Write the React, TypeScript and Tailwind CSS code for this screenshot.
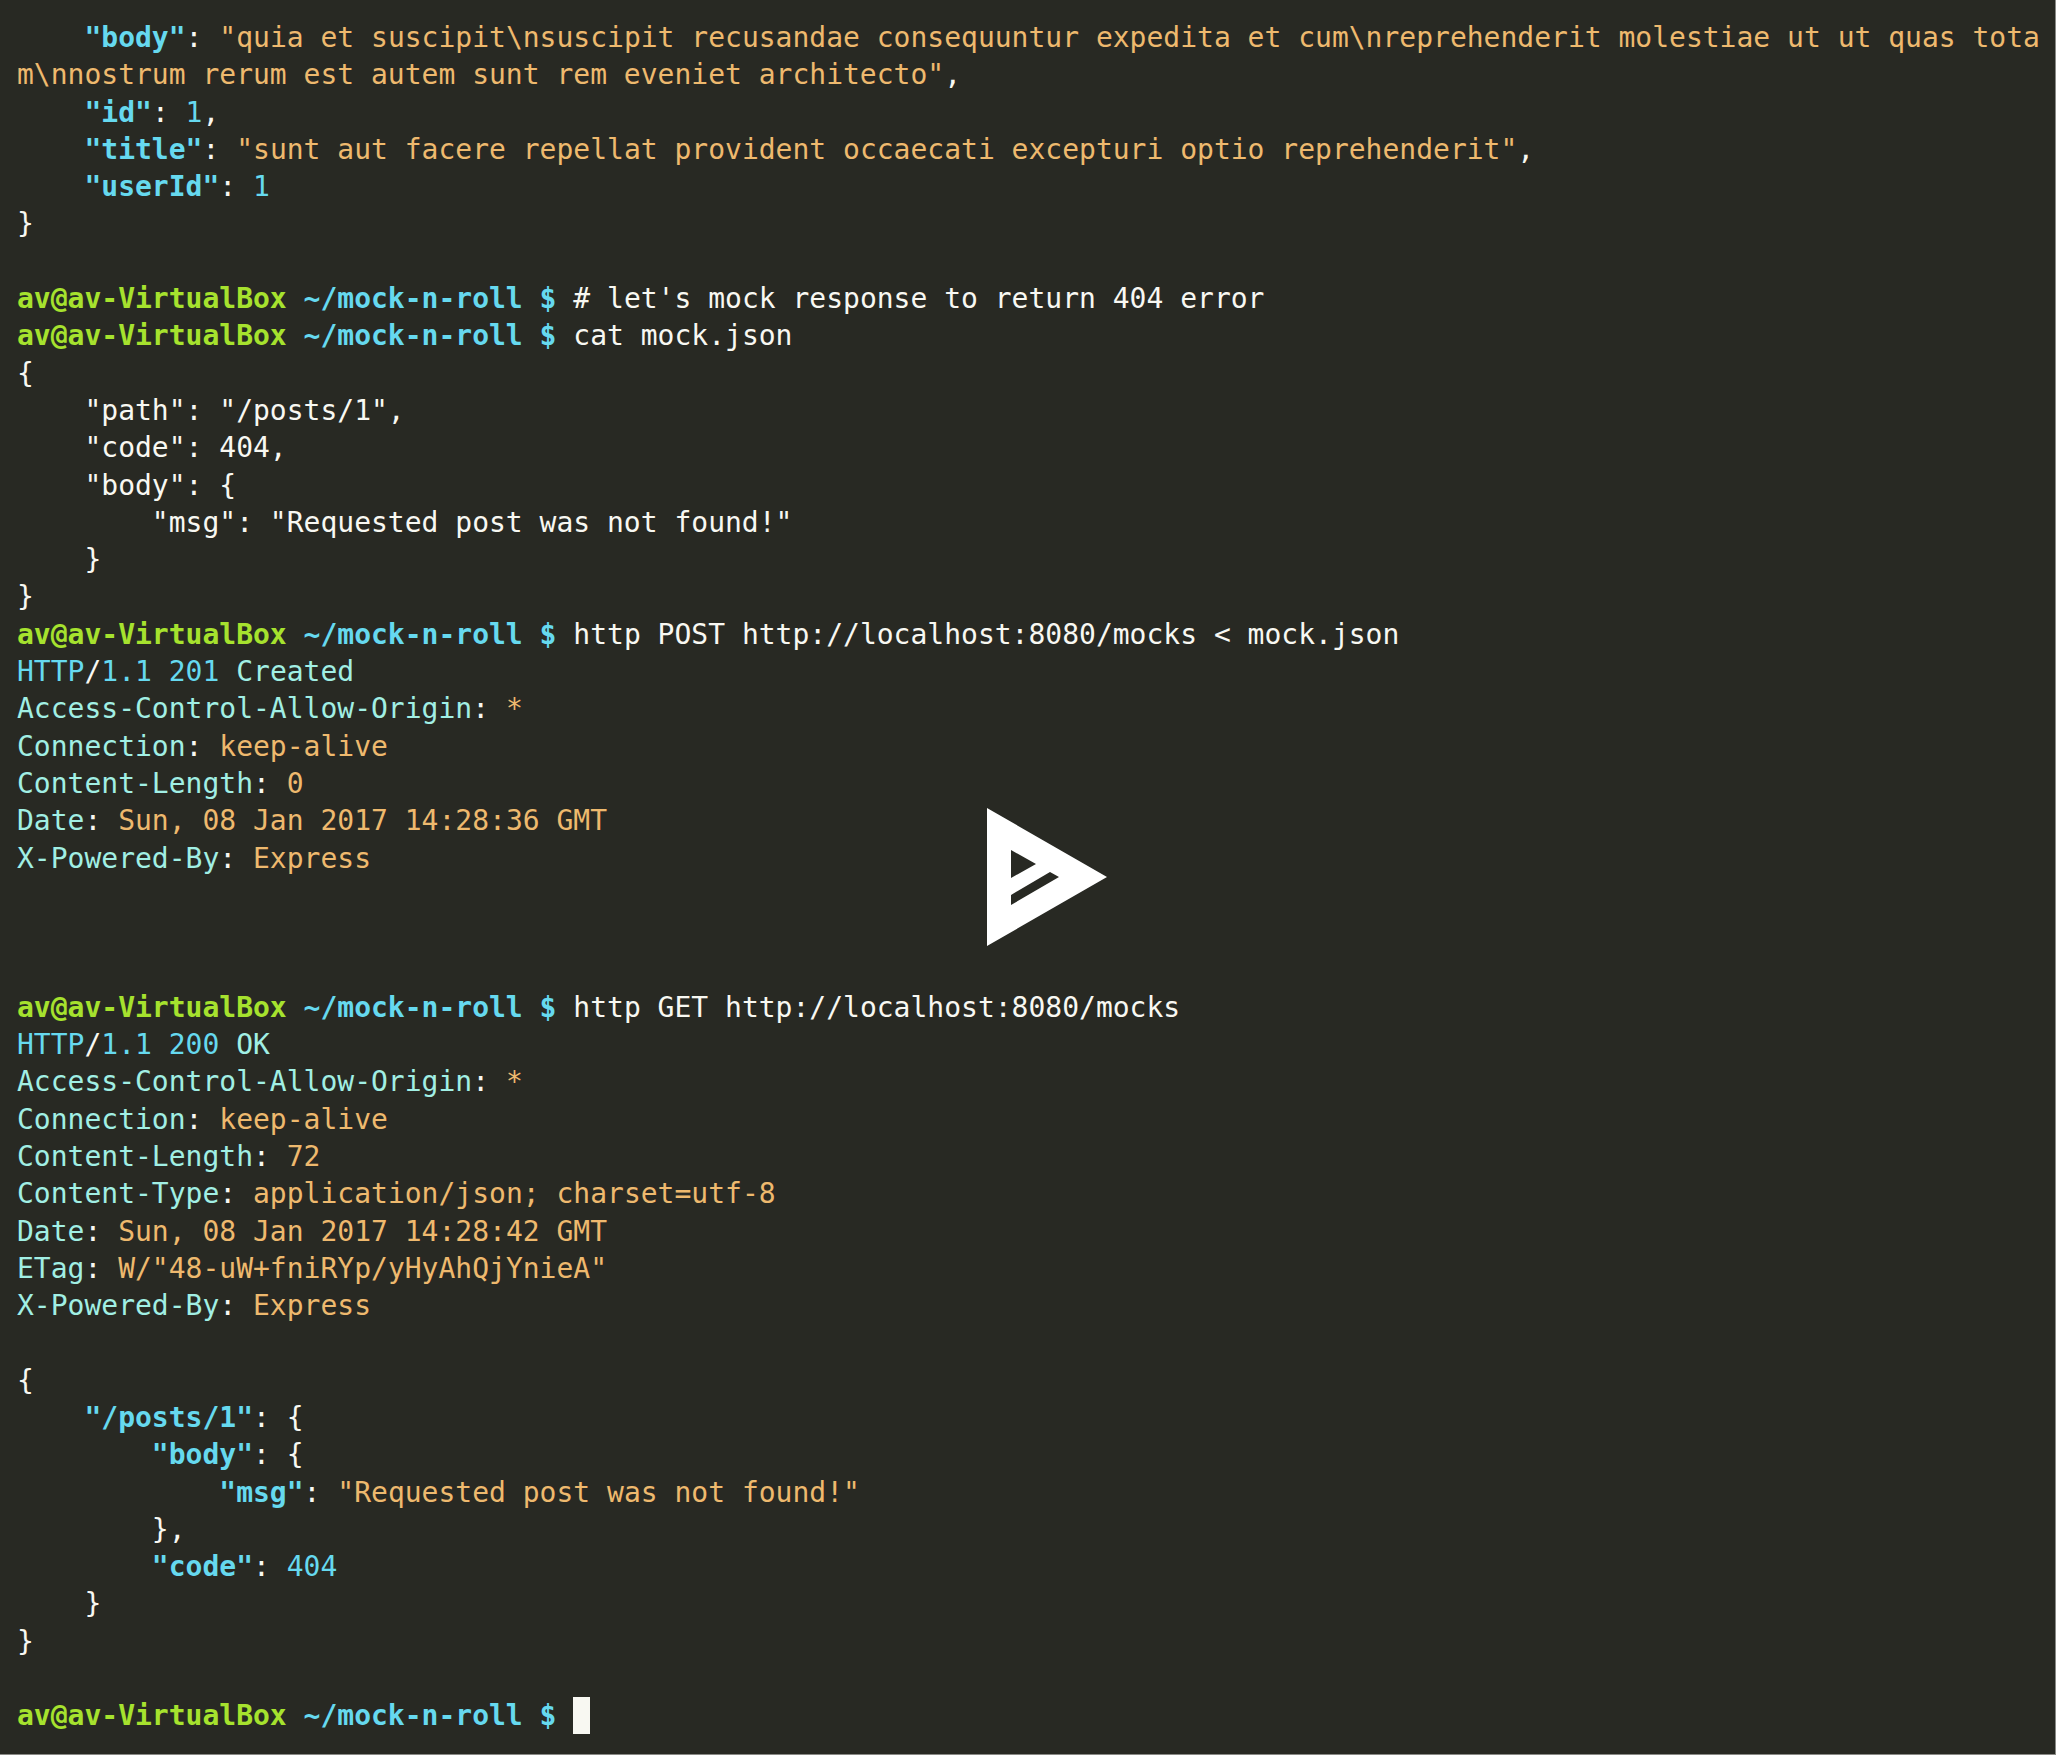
const font = "font-['DejaVu_Sans_Mono','Liberation_Mono',monospace]";

function Prompt({ children }: { children?: React.ReactNode }) {
  return (
    <div>
      <span className="font-bold text-[#a6e22e]">av@av-VirtualBox</span>{' '}
      <span className="font-bold text-[#66d9ef]">~/mock-n-roll $</span> {children}
    </div>
  );
}

function Key({ children }: { children: React.ReactNode }) {
  return <span className="font-bold text-[#66d9ef]">{children}</span>;
}

function Str({ children }: { children: React.ReactNode }) {
  return <span className="text-[#eeb96e]">{children}</span>;
}

function Num({ children }: { children: React.ReactNode }) {
  return <span className="text-[#66d9ef]">{children}</span>;
}

function Header({ name, value }: { name: string; value: string }) {
  return (
    <div>
      <span className="text-[#a1efe4]">{name}</span>: <Str>{value}</Str>
    </div>
  );
}

function Status({ code, text }: { code: string; text: string }) {
  return (
    <div>
      <span className="text-[#66d9ef]">HTTP</span>/<span className="text-[#66d9ef]">1.1 {code}</span>{' '}
      <span className="text-[#a1efe4]">{text}</span>
    </div>
  );
}

const Blank = () => <div className="h-[37.3px]" />;

export default function App() {
  return (
    <div className={`relative h-[1755px] w-[2056px] overflow-hidden border-r border-b border-[#8a8a86] bg-[#282923] pl-[17px] pt-[19px] text-[28px] leading-[37.3px] whitespace-pre text-[#f8f8f2] ${font}`}>
      <div>    <Key>"body"</Key>: <Str>"quia et suscipit\nsuscipit recusandae consequuntur expedita et cum\nreprehenderit molestiae ut ut quas tota</Str></div>
      <div><Str>m\nnostrum rerum est autem sunt rem eveniet architecto"</Str>,</div>
      <div>    <Key>"id"</Key>: <Num>1</Num>,</div>
      <div>    <Key>"title"</Key>: <Str>"sunt aut facere repellat provident occaecati excepturi optio reprehenderit"</Str>,</div>
      <div>    <Key>"userId"</Key>: <Num>1</Num></div>
      <div>{'}'}</div>
      <Blank />
      <Prompt># let's mock response to return 404 error</Prompt>
      <Prompt>cat mock.json</Prompt>
      <div>{'{'}</div>
      <div>    "path": "/posts/1",</div>
      <div>    "code": 404,</div>
      <div>    "body": {'{'}</div>
      <div>        "msg": "Requested post was not found!"</div>
      <div>    {'}'}</div>
      <div>{'}'}</div>
      <Prompt>http POST http://localhost:8080/mocks &lt; mock.json</Prompt>
      <Status code="201" text="Created" />
      <Header name="Access-Control-Allow-Origin" value="*" />
      <Header name="Connection" value="keep-alive" />
      <Header name="Content-Length" value="0" />
      <Header name="Date" value="Sun, 08 Jan 2017 14:28:36 GMT" />
      <Header name="X-Powered-By" value="Express" />
      <Blank />
      <Blank />
      <Blank />
      <Prompt>http GET http://localhost:8080/mocks</Prompt>
      <Status code="200" text="OK" />
      <Header name="Access-Control-Allow-Origin" value="*" />
      <Header name="Connection" value="keep-alive" />
      <Header name="Content-Length" value="72" />
      <Header name="Content-Type" value="application/json; charset=utf-8" />
      <Header name="Date" value="Sun, 08 Jan 2017 14:28:42 GMT" />
      <Header name="ETag" value={'W/"48-uW+fniRYp/yHyAhQjYnieA"'} />
      <Header name="X-Powered-By" value="Express" />
      <Blank />
      <div>{'{'}</div>
      <div>    <Key>"/posts/1"</Key>: {'{'}</div>
      <div>        <Key>"body"</Key>: {'{'}</div>
      <div>            <Key>"msg"</Key>: <Str>"Requested post was not found!"</Str></div>
      <div>        {'}'},</div>
      <div>        <Key>"code"</Key>: <Num>404</Num></div>
      <div>    {'}'}</div>
      <div>{'}'}</div>
      <Blank />
      <Prompt>
        <span className="inline-block h-[37px] w-[17px] bg-[#f8f8f2] align-top" />
      </Prompt>
      {/* asciinema play overlay */}
      <svg className="absolute left-[987px] top-[808px]" width="121" height="138" viewBox="0 0 121 138">
        <path
          fillRule="evenodd"
          fill="#ffffff"
          d="M0 0 L120 69 L0 138 Z M24 42 L24 70 L49 56 Z M24 87 L24 97 L72 69 L63 64 Z"
        />
      </svg>
    </div>
  );
}
